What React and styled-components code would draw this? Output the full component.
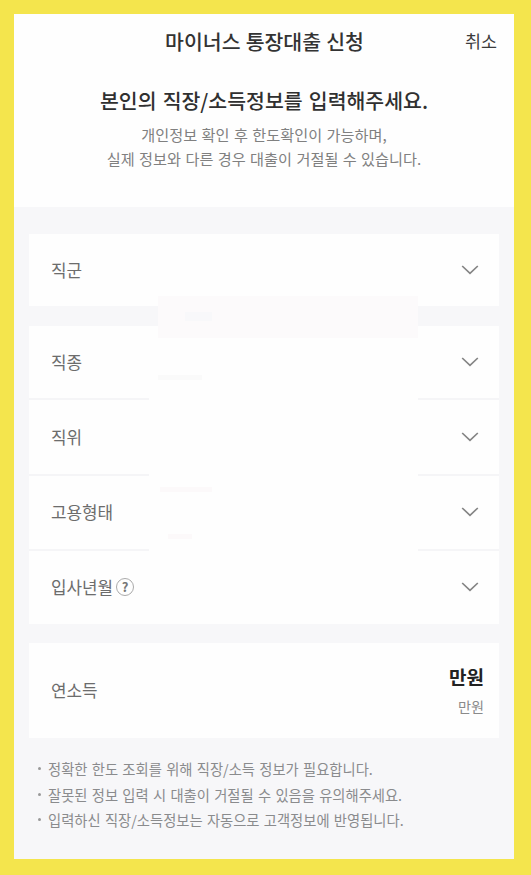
import React from "react";
import styled, { createGlobalStyle } from "styled-components";

const frameColor = "#f4e54d";
const panelColor = "#f7f7f9";
const cardColor = "#fefefe";
const lineColor = "#f5f5f7";
const mainFont = `"Noto Sans CJK KR", "Noto Sans", sans-serif`;

const GlobalStyle = createGlobalStyle`
	* {
		box-sizing: border-box;
		margin: 0;
		padding: 0;
	}
	body {
		background-color: ${frameColor};
		font-family: ${mainFont};
	}
`;

const Frame = styled.div`
	width: 531px;
	height: 875px;
	padding: 14px 17px 16px 14px;
	background-color: ${frameColor};
`;

const Screen = styled.main`
	height: 845px;
	display: flex;
	flex-direction: column;
	background-color: ${panelColor};
`;

const Top = styled.header`
	height: 193px;
	background-color: ${cardColor};
	text-align: center;
`;

const TitleBar = styled.div`
	display: grid;
	grid-template-columns: 60px 1fr 60px;
	align-items: center;
	height: 53px;
	padding: 0 17px 0 18px;
`;

const Title = styled.h1`
	grid-column: 2;
	font-size: 20.5px;
	font-weight: 500;
	line-height: 30px;
	word-spacing: 0.5px;
	color: #333;
	white-space: nowrap;
`;

const Cancel = styled.button`
	grid-column: 3;
	border: none;
	background: none;
	font-family: inherit;
	font-size: 17.4px;
	line-height: 26px;
	text-align: right;
	color: #3c3c3c;
`;

const Intro = styled.section`
	padding-top: 18px;
	h2 {
		font-size: 20.5px;
		font-weight: 500;
		line-height: 30px;
		word-spacing: 1.5px;
		color: #303030;
	}
	p {
		margin-top: 7px;
		font-size: 15.2px;
		line-height: 24px;
		word-spacing: 1px;
		color: #808080;
	}
`;

const Form = styled.div`
	position: relative;
	display: flex;
	flex-direction: column;
	padding: 27px 15px 0;
`;

const Card = styled.section`
	background-color: ${cardColor};
	margin-bottom: ${(props) => props.$gap}px;
`;

const Row = styled.div`
	display: flex;
	align-items: center;
	justify-content: space-between;
	height: ${(props) => props.$height}px;
	padding: 0 20px 1px 22px;
	& + & {
		border-top: 2px solid ${lineColor};
	}
`;

const Label = styled.span`
	display: flex;
	align-items: center;
	gap: 3px;
	font-size: 16.9px;
	line-height: 24px;
	color: #6c6c6c;
`;

const Help = styled.span`
	width: 18px;
	height: 18px;
	border: 1px solid #aaa;
	border-radius: 50%;
	font-size: 13px;
	font-weight: 700;
	line-height: 16px;
	text-align: center;
	color: #777;
`;

const Arrow = styled.svg`
	width: 18px;
	height: 12px;
	fill: none;
	stroke: #858585;
	stroke-width: 1.7;
`;

const Amount = styled.div`
	margin-right: -5px;
	text-align: right;
	strong {
		display: block;
		font-size: 19px;
		font-weight: 700;
		line-height: 28px;
		color: #222;
	}
	span {
		display: block;
		margin-top: 3px;
		font-size: 14.2px;
		line-height: 24px;
		color: #8a8a8a;
	}
`;

/* blank area that hides the selected values */
const Mask = styled.div`
	position: absolute;
	top: 89px;
	left: 135px;
	width: 269px;
	height: 324px;
	padding-left: 9px;
	background: linear-gradient(#fcfafb, #fcfafb) 9px 0 / 260px 42px no-repeat,
		linear-gradient(${cardColor}, ${cardColor}) 0 30px / 100% 294px no-repeat;
`;

const Smudge = styled.div`
	width: ${(props) => props.$width}px;
	height: ${(props) => props.$height}px;
	margin: ${(props) => props.$top}px 0 0 ${(props) => props.$left}px;
	background-color: ${(props) => props.$color};
`;

const Notes = styled.ul`
	list-style: none;
	padding: 18px 0 0 24px;
	li {
		display: flex;
		align-items: center;
		font-size: 14.3px;
		line-height: 25.5px;
		word-spacing: 1.1px;
		color: #8a8b8d;
		white-space: nowrap;
	}
	li::before {
		content: "";
		width: 3px;
		height: 3px;
		margin-right: 7px;
		border-radius: 50%;
		background-color: #999;
	}
`;

function SelectRow(props) {
	return (
		<Row $height={props.height}>
			<Label>
				{props.label}
				{!!props.help && <Help>?</Help>}
			</Label>
			<Arrow viewBox='0 0 18 12'>
				<path d='M1.2 2 L9 9.4 L16.8 2' />
			</Arrow>
		</Row>
	);
}

function App() {
	return (
		<Frame>
			<GlobalStyle />
			<Screen>
				<Top>
					<TitleBar>
						<Title>마이너스 통장대출 신청</Title>
						<Cancel>취소</Cancel>
					</TitleBar>
					<Intro>
						<h2>본인의 직장/소득정보를 입력해주세요.</h2>
						<p>
							개인정보 확인 후 한도확인이 가능하며,
							<br />
							실제 정보와 다른 경우 대출이 거절될 수 있습니다.
						</p>
					</Intro>
				</Top>
				<Form>
					<Card $gap={20}>
						<SelectRow label='직군' height={72} />
					</Card>
					<Card $gap={19}>
						<SelectRow label='직종' height={72} />
						<SelectRow label='직위' height={76} />
						<SelectRow label='고용형태' height={75} />
						<SelectRow label='입사년월' height={75} help />
					</Card>
					<Card $gap={0}>
						<Row $height={95}>
							<Label>연소득</Label>
							<Amount>
								<strong>만원</strong>
								<span>만원</span>
							</Amount>
						</Row>
					</Card>
					<Mask>
						<Smudge $width={27} $height={9} $top={16} $left={27} $color='#f8f8fa' />
						<Smudge $width={44} $height={5} $top={54} $left={0} $color='#fafafa' />
						<Smudge $width={52} $height={5} $top={107} $left={2} $color='#fcf9fa' />
						<Smudge $width={24} $height={5} $top={42} $left={10} $color='#fcf9fa' />
					</Mask>
				</Form>
				<Notes>
					<li>정확한 한도 조회를 위해 직장/소득 정보가 필요합니다.</li>
					<li>잘못된 정보 입력 시 대출이 거절될 수 있음을 유의해주세요.</li>
					<li>입력하신 직장/소득정보는 자동으로 고객정보에 반영됩니다.</li>
				</Notes>
			</Screen>
		</Frame>
	);
}

export default App;
